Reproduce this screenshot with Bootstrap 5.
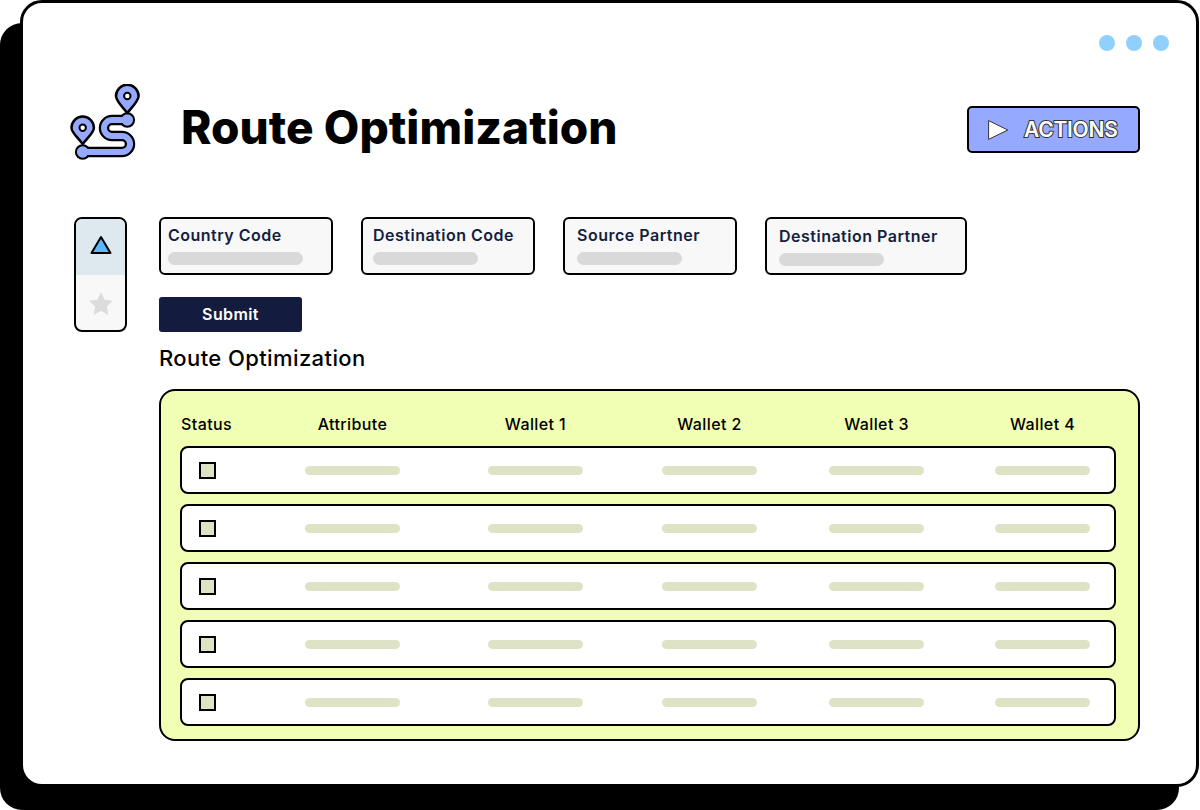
<!DOCTYPE html>
<html lang="en"><head><meta charset="utf-8"><title>Route Optimization</title>
<link href="https://cdn.jsdelivr.net/npm/bootstrap@5.3.0/dist/css/bootstrap.min.css" rel="stylesheet">
<style>
html,body{height:810px;overflow:hidden;background:#fff}
body{font-family:Inter,"Liberation Sans",sans-serif;color:#000;padding:0 1px 23px 20px}
.win{height:787px;border:3px solid #000;border-radius:22px;background:#fff;box-shadow:-20px 23px 0 #000;padding:32px 56px 0 47px}
.dot{width:16px;height:16px;border-radius:50%;background:#90d0ff}
.dots{gap:11px;margin-right:-29px}
.head{margin-top:33px;height:74px}
.logo{width:70px;height:76px;flex:none}
.title{font-size:46px;line-height:54px;font-weight:800;margin:16px 0 0 41px;letter-spacing:.05px}
.act{width:173px;height:47px;margin-top:22px;background:#94a9ff;border:2px solid #000;border-radius:5px;padding:0 0 0 19px;gap:15px}
.act:hover,.act:active{background:#94a9ff!important;border-color:#000!important}
.act span{font-size:21px;font-weight:600;letter-spacing:-.25px;color:#fff;-webkit-text-stroke:2px #333;paint-order:stroke fill;line-height:1}
.body-wrap{margin-top:59px;padding-left:4px;gap:32px}
.side{width:53px;height:115px;border:2px solid #000;border-radius:8px;overflow:hidden;background:#f8f8f8;flex:none}
.side>div{height:56px}
.side .on{background:#dde8ef}
.side .on svg{margin-bottom:4px}
.main-col{width:981px}
.fields{gap:28px}
.fld{width:174px;height:58px;border:2px solid #000;border-radius:6px;background:#f8f8f8;padding:6px 12px 0 12px;color:#141e3f;font-weight:600;font-size:16px;letter-spacing:.5px;line-height:20px}
.fld.f1{padding-left:7px}
.fld.f2{padding-left:10px}
.fld.f4{width:202px;padding-top:7px}
.ph{height:13px;border-radius:7px;background:#d9d9d9;width:105px;margin-top:7px}
.f1 .ph{width:135px}
.sub{width:143px;height:35px;margin-top:22px;background:#131c3e;border:0;border-radius:3px;color:#fff;font-weight:600;font-size:16px;letter-spacing:.4px;padding:0 0 2px}
.sub:hover,.sub:active{background:#131c3e!important;color:#fff!important}
.subt{font-size:22px;font-weight:500;line-height:28px;margin:12px 0 17px;letter-spacing:.4px}
.pan{height:352px;background:#f0ffb4;border:2px solid #000;border-radius:16px;padding:19px 22px 0 19px}
.gr{display:grid;grid-template-columns:90px 165px 201px 147px 187px 145px;justify-items:center;align-items:center}
.hd{height:27px;padding-top:1px;font-size:16px;letter-spacing:.4px;font-weight:500;margin-bottom:9px}
.hd>div:first-child{justify-self:start;padding-left:1px}
.rw{height:48px;width:936px;border:2px solid #000;border-radius:8px;background:#fff;margin-bottom:10px;grid-template-columns:88px 165px 201px 147px 187px 145px}
.rw>div:first-child{justify-self:start;margin-left:17px;width:17px;height:17px;border:2px solid #000;background:#dfe3c6}
.pill{width:95px;height:9px;border-radius:5px;background:#dfe3c6}
</style></head><body>
<div class="win">
  <div class="d-flex justify-content-end dots"><div class="dot"></div><div class="dot"></div><div class="dot"></div></div>
  <div class="d-flex align-items-start head">
    <svg class="logo" viewBox="70 83 70 76" fill="none" stroke="#000" stroke-linejoin="round">
      <path d="M127 119H112a8 8 0 0 0 0 16H122a8 8 0 0 1 0 16H83" stroke-width="10.500"/>
      <circle cx="127.300" cy="119" r="7.800" fill="#000" stroke="none"/>
      <circle cx="82.700" cy="151" r="7.800" fill="#000" stroke="none"/>
      <path d="M127 119H112a8 8 0 0 0 0 16H122a8 8 0 0 1 0 16H83" stroke="#94a9ff" stroke-width="6"/>
      <circle cx="127.300" cy="119" r="5.800" fill="#94a9ff" stroke="none"/>
      <circle cx="82.700" cy="151" r="5.800" fill="#94a9ff" stroke="none"/>
      <path d="M127.300 112C121 104 116 100 116 95a11.300 11.300 0 0 1 22.600 0C138.600 100 133.600 104 127.300 112Z" fill="#94a9ff" stroke-width="2.500"/>
      <circle cx="127.300" cy="95" r="3.200" fill="#fff" stroke-width="2"/>
      <path d="M82.700 143C76.500 135 71.500 131.500 71.500 126.700a11.200 11.200 0 0 1 22.400 0C93.900 131.500 89 135 82.700 143Z" fill="#94a9ff" stroke-width="2.500"/>
      <circle cx="82.700" cy="126.700" r="3.200" fill="#fff" stroke-width="2"/>
    </svg>
    <h1 class="title">Route Optimization</h1>
    <button class="btn act d-flex align-items-center ms-auto" type="button">
      <svg width="21" height="20" viewBox="0 0 21 20"><path d="M.6.6L19.800 10L.6 19.400Z" fill="#fff" stroke="#333" stroke-linejoin="round"/></svg>
      <span>ACTIONS</span>
    </button>
  </div>
  <div class="d-flex body-wrap">
    <div class="side">
      <div class="on d-flex align-items-center justify-content-center"><svg width="22" height="20" viewBox="0 0 22 20"><path d="M11 2L20.500 18H1.500Z" fill="#5bb8ff" stroke="#000" stroke-width="2" stroke-linejoin="round"/></svg></div>
      <div class="d-flex align-items-center justify-content-center"><svg width="26" height="25" viewBox="0 0 26 25"><path d="M13 1l3.600 7.800 8.400 1-6.200 5.800 1.600 8.400L13 19.800 5.600 24l1.600-8.400L1 9.800l8.400-1Z" fill="#dcdcdc"/></svg></div>
    </div>
    <div class="main-col">
      <div class="d-flex fields">
        <div class="fld f1">Country Code<div class="ph"></div></div>
        <div class="fld f2">Destination Code<div class="ph"></div></div>
        <div class="fld">Source Partner<div class="ph"></div></div>
        <div class="fld f4">Destination Partner<div class="ph"></div></div>
      </div>
      <button class="btn sub d-block" type="button">Submit</button>
      <div class="subt">Route Optimization</div>
      <div class="pan">
        <div class="gr hd"><div>Status</div><div>Attribute</div><div>Wallet 1</div><div>Wallet 2</div><div>Wallet 3</div><div>Wallet 4</div></div>
        <div class="gr rw"><div></div><div class="pill"></div><div class="pill"></div><div class="pill"></div><div class="pill"></div><div class="pill"></div></div>
        <div class="gr rw"><div></div><div class="pill"></div><div class="pill"></div><div class="pill"></div><div class="pill"></div><div class="pill"></div></div>
        <div class="gr rw"><div></div><div class="pill"></div><div class="pill"></div><div class="pill"></div><div class="pill"></div><div class="pill"></div></div>
        <div class="gr rw"><div></div><div class="pill"></div><div class="pill"></div><div class="pill"></div><div class="pill"></div><div class="pill"></div></div>
        <div class="gr rw"><div></div><div class="pill"></div><div class="pill"></div><div class="pill"></div><div class="pill"></div><div class="pill"></div></div>
      </div>
    </div>
  </div>
</div>
<script src="https://cdn.jsdelivr.net/npm/bootstrap@5.3.0/dist/js/bootstrap.bundle.min.js"></script>
</body></html>
